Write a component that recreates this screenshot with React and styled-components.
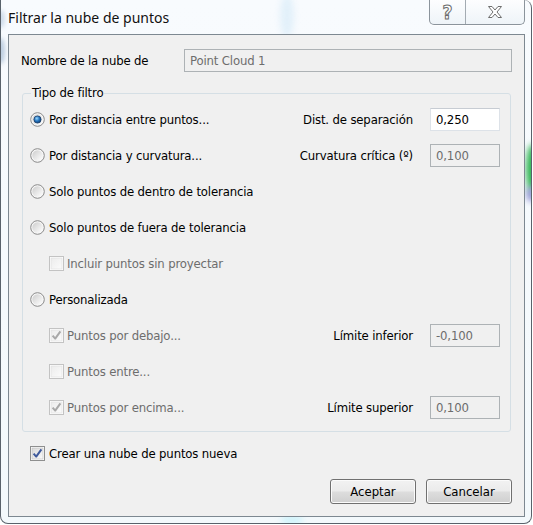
import React, { useId } from 'react';
import styled, { createGlobalStyle } from 'styled-components';

const GlobalStyle = createGlobalStyle`
  html, body {
    margin: 0;
    padding: 0;
    background: #ffffff;
  }
  body {
    width: 533px;
    height: 525px;
    overflow: hidden;
  }
`;

const rows = [
    { kind: 'radio', label: 'Por distancia entre puntos...', checked: true, field: { label: 'Dist. de separación', value: '0,250', enabled: true } },
    { kind: 'radio', label: 'Por distancia y curvatura...', field: { label: 'Curvatura crítica (º)', value: '0,100' } },
    { kind: 'radio', label: 'Solo puntos de dentro de tolerancia' },
    { kind: 'radio', label: 'Solo puntos de fuera de tolerancia' },
    { kind: 'check', label: 'Incluir puntos sin proyectar', disabled: true, indent: true },
    { kind: 'radio', label: 'Personalizada' },
    { kind: 'check', label: 'Puntos por debajo...', checked: true, disabled: true, indent: true, field: { label: 'Límite inferior', value: '-0,100' } },
    { kind: 'check', label: 'Puntos entre...', disabled: true, indent: true },
    { kind: 'check', label: 'Puntos por encima...', checked: true, disabled: true, indent: true, field: { label: 'Límite superior', value: '0,100' } },
];

// blurred spots of the desktop seen through the glass frame
const glows = [
    { x: 279, y: -6, w: 14, h: 44, c: '#e2f0fa', b: 3 },
    { x: 280, y: 513, w: 22, h: 14, c: '#d4f4fb', b: 3 },
    { x: -4, y: 10, w: 8, h: 18, c: '#cfdcea', b: 2 },
    { x: -4, y: 38, w: 8, h: 26, c: '#bccde0', b: 2 },
    { x: 525, y: 144, w: 14, h: 50, c: '#2fb552', b: 3 },
    { x: 525, y: 186, w: 12, h: 16, c: '#9a9cd8', b: 3 },
];

function RadioMark({ checked }) {
    const id = useId();
    return (
        <svg width="15" height="15" viewBox="0 0 15 15">
            <defs>
                <linearGradient id={`${id}r`} x1="0" y1="0" x2="1" y2="1">
                    <stop offset="0" stopColor="#cdcdcd" />
                    <stop offset="1" stopColor="#ffffff" />
                </linearGradient>
                <radialGradient id={`${id}d`} cx="0.4" cy="0.35" r="0.7">
                    <stop offset="0" stopColor="#9ad9ff" />
                    <stop offset="0.5" stopColor="#2878c2" />
                    <stop offset="1" stopColor="#0c3a70" />
                </radialGradient>
            </defs>
            <circle cx="7.5" cy="7.5" r="6.8" fill="#f6f6f6" stroke="#8b8b8b" />
            <circle cx="7.5" cy="7.5" r="5.2" fill={`url(#${id}r)`} />
            {checked && (
                <circle cx="7.5" cy="7.5" r="3.6" fill={`url(#${id}d)`} stroke="#1c3e68" strokeWidth="0.8" />
            )}
        </svg>
    );
}

function CheckMark({ checked, disabled }) {
    const id = useId();
    return (
        <svg width="15" height="15" viewBox="0 0 15 15">
            <defs>
                <linearGradient id={`${id}g`} x1="0" y1="0" x2="1" y2="1">
                    <stop offset="0" stopColor={disabled ? '#ececec' : '#d9d9d9'} />
                    <stop offset="1" stopColor="#fbfbfb" />
                </linearGradient>
            </defs>
            <rect x="0.5" y="0.5" width="14" height="14" fill="#ffffff" stroke={disabled ? '#c3c3c3' : '#8e8f8f'} />
            <rect x="2" y="2" width="11" height="11" fill={`url(#${id}g)`} stroke={disabled ? '#dedede' : '#bcbcbc'} strokeWidth="0.6" />
            {checked && (
                <path
                    d="M3.6 7.6 L6.2 10.6 L11.4 3.4"
                    fill="none"
                    stroke={disabled ? '#a9a9a9' : '#3f5a9c'}
                    strokeWidth="2"
                    strokeLinejoin="round"
                />
            )}
        </svg>
    );
}

function Option({ row }) {
    return (
        <OptionLabel $indent={row.indent} $disabled={row.disabled}>
            {row.kind === 'radio' ? (
                <RadioMark checked={row.checked} />
            ) : (
                <CheckMark checked={row.checked} disabled={row.disabled} />
            )}
            <span>{row.label}</span>
        </OptionLabel>
    );
}

export default function App() {
    return (
        <>
            <GlobalStyle />
            <Window>
                {glows.map((g, i) => (
                    <Glow key={i} style={{ left: g.x, top: g.y, width: g.w, height: g.h, background: g.c, filter: `blur(${g.b}px)` }} />
                ))}
                <TitleBar>Filtrar la nube de puntos</TitleBar>
                <Caption>
                    <CaptionButton $w={35}>
                        <HelpGlyph>?</HelpGlyph>
                    </CaptionButton>
                    <CaptionButton $w={58}>
                        <svg width="16" height="14" viewBox="0 0 16 14">
                            <polygon
                                points="1.5,1.5 5,1.5 8,5 11,1.5 14.5,1.5 10,7 14.5,12.5 11,12.5 8,9 5,12.5 1.5,12.5 6,7"
                                fill="#ffffff"
                                stroke="#6f6f6f"
                                strokeWidth="1"
                                strokeLinejoin="round"
                            />
                        </svg>
                    </CaptionButton>
                </Caption>

                <Client>
                    <NameRow>
                        <NameLabel>Nombre de la nube de</NameLabel>
                        <TextBox $wide>Point Cloud 1</TextBox>
                    </NameRow>

                    <Group>
                        <Legend>Tipo de filtro</Legend>
                        {rows.map((row) => (
                            <Row key={row.label}>
                                <Option row={row} />
                                {row.field && (
                                    <Field>
                                        <FieldLabel>{row.field.label}</FieldLabel>
                                        <TextBox $enabled={row.field.enabled}>{row.field.value}</TextBox>
                                    </Field>
                                )}
                            </Row>
                        ))}
                    </Group>

                    <NewCloud>
                        <Option row={{ kind: 'check', label: 'Crear una nube de puntos nueva', checked: true }} />
                    </NewCloud>

                    <ButtonBar>
                        <Button>Aceptar</Button>
                        <Button>Cancelar</Button>
                    </ButtonBar>
                </Client>
            </Window>
        </>
    );
}

const Window = styled.div`
    position: relative;
    box-sizing: border-box;
    width: 532px;
    height: 524px;
    display: flex;
    flex-direction: column;
    border: 1px solid #59626b;
    border-top: none;
    border-radius: 0 8px 8px 8px;
    background: linear-gradient(180deg, #f8fbfe 0%, #f3f9fc 100%);
    overflow: hidden;
    font-family: 'DejaVu Sans Condensed', 'DejaVu Sans', sans-serif;
    font-stretch: condensed;
    font-size: 13px;
    letter-spacing: -0.15px;
    color: #000000;
`;

const Glow = styled.div`
    position: absolute;
    border-radius: 50%;
`;

const TitleBar = styled.div`
    position: relative;
    box-sizing: border-box;
    height: 34px;
    padding: 0 0 0 7px;
    display: flex;
    align-items: center;
    font-family: 'Noto Sans', 'Open Sans', sans-serif;
    font-stretch: normal;
    font-size: 14px;
    letter-spacing: 0;
    color: #111111;
    text-shadow: 0 0 6px #ffffff;
`;

const Caption = styled.div`
    position: absolute;
    top: 0;
    right: 6px;
    display: flex;
    height: 24px;
    border: 1px solid #8b949c;
    border-top: none;
    border-radius: 0 0 5px 5px;
    background: linear-gradient(180deg, rgba(255, 255, 255, 0.7), rgba(236, 242, 247, 0.8));
    box-shadow: 0 1px 0 rgba(255, 255, 255, 0.8);
    overflow: hidden;
`;

const CaptionButton = styled.div`
    width: ${(p) => p.$w}px;
    display: flex;
    align-items: center;
    justify-content: center;
    & + & {
        border-left: 1px solid #a3abb2;
    }
`;

const HelpGlyph = styled.span`
    font-family: 'DejaVu Sans', sans-serif;
    font-weight: bold;
    font-size: 19px;
    line-height: 1;
    color: #ffffff;
    -webkit-text-stroke: 1px #6c6c6c;
`;

const Client = styled.div`
    position: relative;
    flex: 1;
    display: flex;
    flex-direction: column;
    margin: 0 6px 6px 7px;
    padding: 14px 12px 12px 12px;
    border: 1px solid #7d8891;
    background: #f0f0f0;
`;

const NameRow = styled.div`
    display: flex;
    align-items: center;
`;

const NameLabel = styled.span`
    width: 163px;
`;

const TextBox = styled.div`
    box-sizing: border-box;
    width: ${(p) => (p.$wide ? 'auto' : '70px')};
    flex: ${(p) => (p.$wide ? 1 : 'none')};
    height: 23px;
    padding: 0 5px;
    display: flex;
    align-items: center;
    border: 1px solid ${(p) => (p.$enabled ? '#dde2e8' : '#adb2b5')};
    border-top-color: ${(p) => (p.$enabled ? '#c7ccd3' : '#adb2b5')};
    background: ${(p) => (p.$enabled ? '#ffffff' : '#f0f0f0')};
    color: ${(p) => (p.$enabled ? '#000000' : '#6d6d6d')};
`;

const Group = styled.fieldset`
    margin: 13px 1px 0 1px;
    padding: 0 10px 6px 7px;
    border: 1px solid #d5dfe5;
    border-radius: 3px;
`;

const Legend = styled.legend`
    margin-left: 1px;
    padding: 0 1px;
    line-height: 16px;
`;

const Row = styled.div`
    height: 36px;
    display: flex;
    align-items: center;
    justify-content: space-between;
`;

const OptionLabel = styled.label`
    display: flex;
    align-items: center;
    gap: ${(p) => (p.$indent ? 3 : 4)}px;
    margin-left: ${(p) => (p.$indent ? 19 : 0)}px;
    color: ${(p) => (p.$disabled ? '#6d6d6d' : '#000000')};
`;

const Field = styled.div`
    display: flex;
    align-items: center;
    gap: 17px;
`;

const FieldLabel = styled.span`
    text-align: right;
`;

const NewCloud = styled.div`
    margin: 13px 0 0 9px;
    height: 16px;
    display: flex;
    align-items: center;
`;

const ButtonBar = styled.div`
    margin-top: auto;
    display: flex;
    justify-content: flex-end;
    gap: 10px;
`;

const Button = styled.button`
    box-sizing: border-box;
    width: 86px;
    height: 25px;
    padding: 0;
    border: 1px solid #707070;
    border-radius: 3px;
    background: linear-gradient(180deg, #f2f2f2 0%, #ebebeb 48%, #dddddd 52%, #cfcfcf 100%);
    box-shadow: inset 0 0 0 1px #fbfbfb;
    font: inherit;
    color: #000000;
`;
